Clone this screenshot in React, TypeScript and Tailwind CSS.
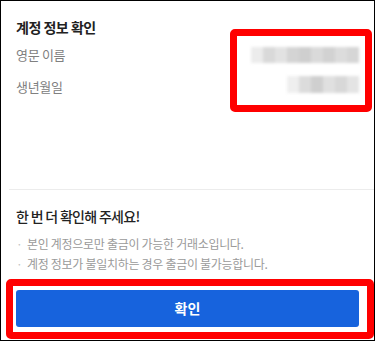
import React from "react";

const FONT = { fontFamily: '"Noto Sans CJK KR", "Noto Sans", sans-serif' };

// blurred placeholder for hidden personal data
function BlurValue({ shades }: { shades: string[] }) {
  return (
    <div className="flex h-full blur-[1.5px]">
      {shades.map((c, i) => (
        <div key={i} className="h-full w-[12px]" style={{ background: c }} />
      ))}
    </div>
  );
}

export default function App() {
  return (
    <div className="w-[377px] h-[343px] bg-white" style={FONT}>
      <div className="relative w-[375px] h-[341px] border border-black bg-white flex flex-col">
        {/* Account info */}
        <div className="h-[188px] px-[15px] pt-4">
          <div className="h-5 leading-5 text-[14px] tracking-[-0.5px] font-bold text-[#222]">계정 정보 확인</div>
          <div className="mt-2 flex flex-col gap-3">
            <div className="h-5 flex items-center justify-between">
              <span className="text-[13px] tracking-[-0.3px] text-[#808080]">영문 이름</span>
              <div className="h-[16px]">
                <BlurValue shades={["#ececec", "#d9d9d9", "#e2e2e2", "#d4d4d4", "#cfcfcf", "#dadada", "#d2d2d2", "#dcdcdc", "#d6d6d6"]} />
              </div>
            </div>
            <div className="h-5 flex items-center justify-between">
              <span className="text-[13px] tracking-[-0.3px] text-[#808080]">생년월일</span>
              <div className="h-[17px] -mt-1.5">
                <BlurValue shades={["#efefef", "#dcdcdc", "#cfcfcf", "#e0e0e0", "#d8d8d8", "#e4e4e4"]} />
              </div>
            </div>
          </div>
        </div>
        <div className="h-px ml-2 bg-[#ececec]" />

        {/* Notice */}
        <div className="px-[15px] pt-4">
          <div className="h-5 leading-5 text-[14px] tracking-[-0.7px] font-medium text-[#222]">한 번 더 확인해 주세요!</div>
          <ul className="mt-2">
            {["본인 계정으로만 출금이 가능한 거래소입니다.", "계정 정보가 불일치하는 경우 출금이 불가능합니다."].map((t) => (
              <li key={t} className="h-5 flex items-center text-[12px] tracking-[-0.3px] text-[#9a9a9a]">
                <span className="w-[11px] text-[#c4c4c4]">·</span>
                {t}
              </li>
            ))}
          </ul>
          <button className="mt-4 w-full h-[37px] rounded-[3px] bg-[#1763dd] text-white text-[14px] font-bold">
            확인
          </button>
        </div>

        {/* annotation boxes */}
        <div className="absolute left-[229px] top-[28px] w-[142px] h-[83px] border-[7px] border-[#ff0000] rounded-[5px]" />
        <div className="absolute left-[5px] top-[278px] w-[368px] h-[60px] border-[7px] border-[#ff0000] rounded-[5px]" />
      </div>
    </div>
  );
}
